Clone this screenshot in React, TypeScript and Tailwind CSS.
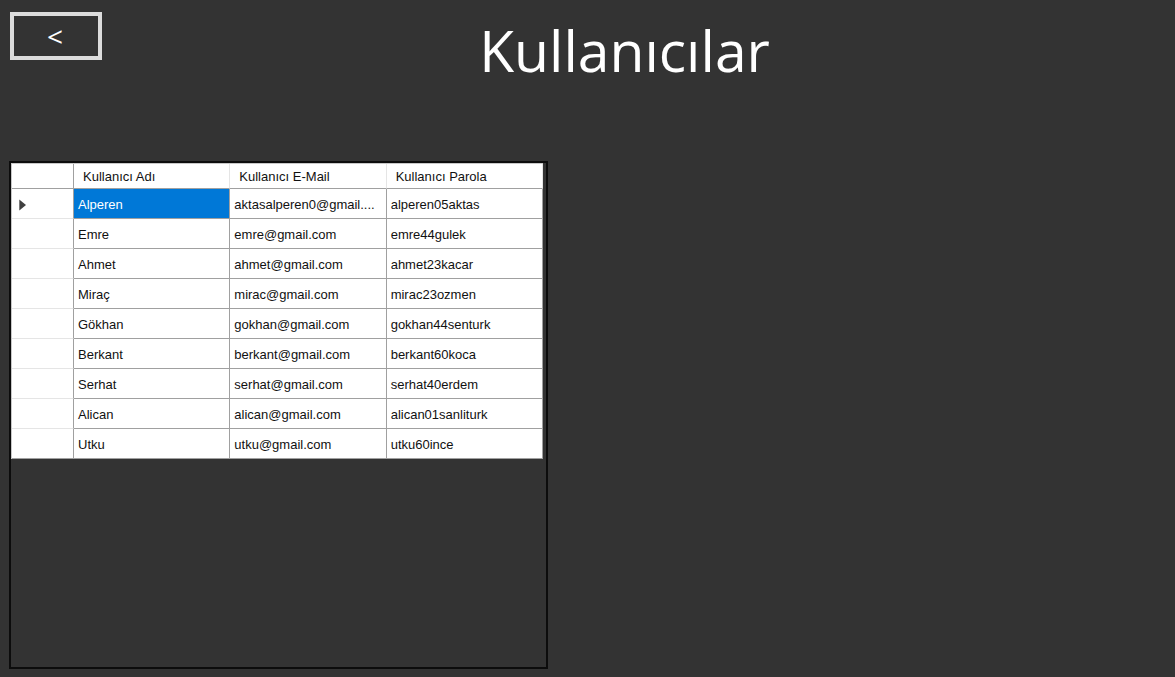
import React from "react";

type User = { name: string; email: string; password: string };

const users: User[] = [
  { name: "Alperen", email: "aktasalperen0@gmail....", password: "alperen05aktas" },
  { name: "Emre", email: "emre@gmail.com", password: "emre44gulek" },
  { name: "Ahmet", email: "ahmet@gmail.com", password: "ahmet23kacar" },
  { name: "Miraç", email: "mirac@gmail.com", password: "mirac23ozmen" },
  { name: "Gökhan", email: "gokhan@gmail.com", password: "gokhan44senturk" },
  { name: "Berkant", email: "berkant@gmail.com", password: "berkant60koca" },
  { name: "Serhat", email: "serhat@gmail.com", password: "serhat40erdem" },
  { name: "Alican", email: "alican@gmail.com", password: "alican01sanliturk" },
  { name: "Utku", email: "utku@gmail.com", password: "utku60ince" },
];

const headers = ["Kullanıcı Adı", "Kullanıcı E-Mail", "Kullanıcı Parola"];

const cell = "border-r border-b border-[#a0a0a0] px-1 pt-0.5 pb-0 whitespace-nowrap";

export default function App() {
  return (
    <div className="flex min-h-screen flex-col bg-[#333333] px-[9px] pt-3 pb-2 font-['Liberation_Sans',sans-serif]">
      <header className="grid grid-cols-[1fr_auto_1fr] items-start pb-[73px]">
        <button
          type="button"
          className="ml-px flex h-12 w-[92px] items-center justify-center border-4 border-[#dcdcdc] pr-0.5 font-['Open_Sans',sans-serif] text-[28px] leading-none text-white"
        >
          &lt;
        </button>
        <h1 className="pl-[74px] font-['Open_Sans',sans-serif] text-[57px] leading-19 text-white">
          Kullanıcılar
        </h1>
      </header>
      <main className="flex grow">
        <div className="w-[539px] grow-0 border-2 border-[#0c0c0c]">
          <table className="w-[532px] table-fixed border-separate border-spacing-0 border-t border-l border-[#c8c8c8] bg-white text-left text-[13px] text-[#111111]">
            <colgroup>
              <col className="w-[62px]" />
              <col />
              <col />
              <col />
            </colgroup>
            <thead>
              <tr className="h-[25px]">
                <td className="border-r border-b border-[#a0a0a0]" />
                {headers.map((h) => (
                  <th
                    key={h}
                    scope="col"
                    className="border-r border-b border-r-[#e5e5e5] border-b-[#a0a0a0] pt-0.5 pl-[9px] font-normal whitespace-nowrap"
                  >
                    {h}
                  </th>
                ))}
              </tr>
            </thead>
            <tbody>
              {users.map((u, i) => (
                <tr key={u.name} className="h-[30px] last:*:border-b-[#a0a0a0]">
                  <td className="border-r border-b border-r-[#a0a0a0] border-b-[#e5e5e5] pt-0.5 pl-[7px]">
                    {i === 0 && (
                      <svg className="block" width="8" height="12" viewBox="0 0 8 12" aria-hidden="true">
                        <path d="M0.3 0.5 L7 6 L0.3 11.5 Z" fill="#404040" />
                      </svg>
                    )}
                  </td>
                  <td className={i === 0 ? `${cell} bg-[#0078d7] text-white` : cell}>{u.name}</td>
                  <td className={cell}>{u.email}</td>
                  <td className={cell}>{u.password}</td>
                </tr>
              ))}
            </tbody>
          </table>
        </div>
      </main>
    </div>
  );
}
